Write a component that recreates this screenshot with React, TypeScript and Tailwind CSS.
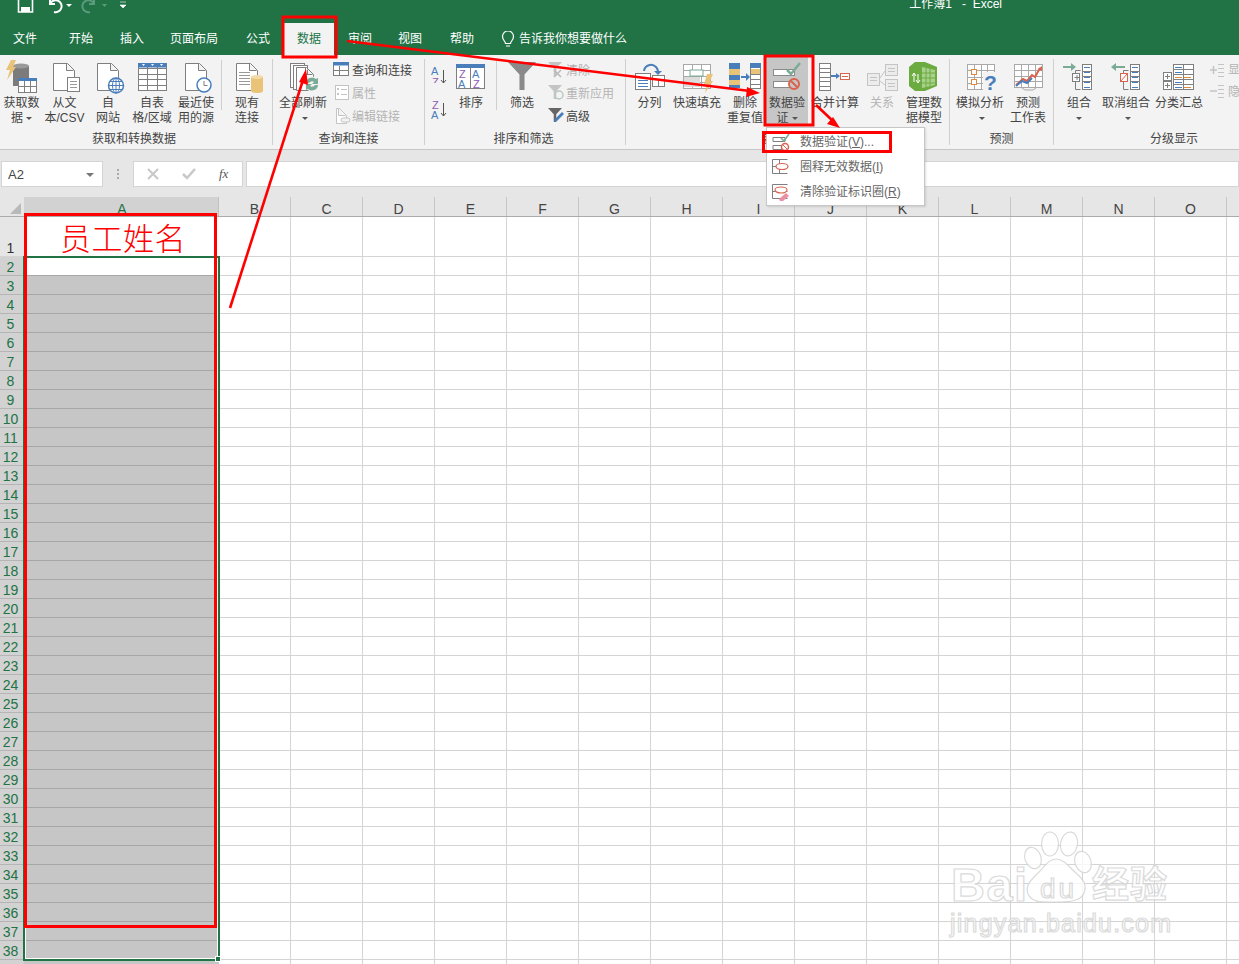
import React from "react";

const GRAY = "#7f7f7f";
const BLUE = "#4a7ebb";
const ORANGE = "#e9c377";
const RED = "#d9634c";
const TEAL = "#7aab96";
const FADED = "#c4c4c4";
const PURPLE = "#8e5bb5";

const COLUMNS = ["B", "C", "D", "E", "F", "G", "H", "I", "J", "K", "L", "M", "N", "O", "P"];
const ROWS = Array.from({ length: 38 }, (_, i) => i + 2);

function Caret({ shift }: { shift?: boolean }) {
  return (
    <svg width="6" height="3" viewBox="0 0 6 3" className={`inline-block align-middle ${shift ? "ml-[4px]" : ""}`}>
      <path d="M0 0h6L3 3z" fill="#555" />
    </svg>
  );
}

function Doc({ x, y, w = 21, h = 27, c = GRAY }: { x: number; y: number; w?: number; h?: number; c?: string }) {
  return (
    <path
      d={`M${x + 0.5} ${y + 0.5}h${w - 7}l7 7v${h - 7}h-${w}z M${x + w - 7.5} ${y + 0.5}v7h7`}
      fill="#fff"
      stroke={c}
    />
  );
}

interface IBtnProps {
  x: number;
  w: number;
  lines: React.ReactNode[];
  active?: boolean;
  children?: React.ReactNode;
}
// x is the page x of the button, icon paths are written in page coordinates
function Btn({ x, w, lines, active, children }: IBtnProps) {
  return (
    <div
      style={{ width: w }}
      className={`flex flex-col items-center shrink-0 whitespace-nowrap ${
        active ? "bg-[#c6c6c6] -mt-[2px] pt-[2px] h-[67px]" : ""
      }`}
    >
      <svg width={w} height="36" viewBox={`${x} 59 ${w} 36`} className="shrink-0 block mb-[1px]">
        {children}
      </svg>
      {lines.map((l, i) => (
        <div key={i} className="h-[15px] leading-[15px] flex items-center gap-[3px]">
          {l}
        </div>
      ))}
    </div>
  );
}

function Small({
  y,
  x,
  label,
  faded,
  children,
}: {
  y: number;
  x: number;
  label: string;
  faded?: boolean;
  children?: React.ReactNode;
}) {
  return (
    <div className={`flex items-center h-[23px] whitespace-nowrap ${faded ? "text-[#b4b4b4]" : ""}`}>
      <svg width="19" height="23" viewBox={`${x} ${y} 19 23`} className="block shrink-0">
        {children}
      </svg>
      <span>{label}</span>
    </div>
  );
}

function Group({
  w,
  label,
  border = true,
  labelClass = "",
  children,
}: {
  w: number;
  label: string;
  border?: boolean;
  labelClass?: string;
  children: React.ReactNode;
}) {
  return (
    <div
      style={{ width: w }}
      className={`shrink-0 flex flex-col h-[86px] ${border ? "border-r border-[#cfcfcf]" : ""}`}
    >
      <div className="flex h-[73px] shrink-0">{children}</div>
      <div className={`h-[15px] shrink-0 leading-[15px] text-center ${labelClass}`}>{label}</div>
    </div>
  );
}

function GridLines({ x, y, w, h, cols, rows, c = GRAY }: { x: number; y: number; w: number; h: number; cols: number; rows: number; c?: string }) {
  const lines: React.ReactNode[] = [];
  for (let i = 1; i < cols; i++) {
    const px = x + Math.round((w * i) / cols) + 0.5;
    lines.push(<path key={`c${i}`} d={`M${px} ${y}v${h}`} stroke={c} fill="none" />);
  }
  for (let i = 1; i < rows; i++) {
    const py = y + Math.round((h * i) / rows) + 0.5;
    lines.push(<path key={`r${i}`} d={`M${x} ${py}h${w}`} stroke={c} fill="none" />);
  }
  return (
    <g>
      <rect x={x + 0.5} y={y + 0.5} width={w} height={h} fill="#fff" stroke={c} />
      {lines}
    </g>
  );
}

function Lines({ x, y, w, n, gap = 3, c = GRAY }: { x: number; y: number; w: number; n: number; gap?: number; c?: string }) {
  return (
    <g>
      {Array.from({ length: n }, (_, i) => (
        <path key={i} d={`M${x} ${y + i * gap + 0.5}h${w}`} stroke={c} />
      ))}
    </g>
  );
}

function Funnel({ x, y, s, c }: { x: number; y: number; s: number; c: string }) {
  return (
    <path
      d={`M${x} ${y}h${s}l${-s * 0.41} ${s * 0.45}v${s * 0.55}h${-s * 0.18}v${-s * 0.55}z`}
      fill={c}
    />
  );
}

function Outline({ x, c }: { x: number; c: string }) {
  // small +/- outline rows with the bracket and three blue list cells
  return (
    <g>
      <path d={`M${x + 12.5} 71v-0.5h5 M${x + 12.5} 71v2 M${x + 12.5} 82v7.5h5`} stroke={GRAY} fill="none" />
      <rect x={x + 9.5} y={73.5} width="7" height="8" fill="#fff" stroke={c} />
      <rect x={x + 19.5} y={64.5} width="9" height="25" fill="#fff" stroke={GRAY} />
      <Lines x={x + 21} y={67} w={6} n={5} gap={5} c={BLUE} />
      <path d={`M${x + 19} 71.5h10 M${x + 19} 76.5h10 M${x + 19} 81.5h10 M${x + 19} 86.5`} stroke={GRAY} />
    </g>
  );
}

function Ribbon() {
  return (
    <div className="flex h-[95px] bg-[#f3f3f3] border-b border-[#c6c6c6] pt-[4px] text-[#444] overflow-hidden">
      <Group w={273} label="获取和转换数据" labelClass="pr-[4px]">
        <Btn x={0} w={43} lines={["获取数", <>据 <Caret /></>]}>
          <rect x="13" y="66" width="16" height="20" fill="#7c7c7c" />
          <ellipse cx="21" cy="66" rx="8" ry="2.5" fill="#9a9a9a" />
          <path d="M11 60h5l-3 7h3l-9 13 3-10H6z" fill={ORANGE} />
          <rect x="18.5" y="78.5" width="18" height="14" fill="#fff" stroke={GRAY} />
          <rect x="18" y="78" width="19" height="3" fill={BLUE} />
          <path d="M24.5 81v11 M30.500 81v11 M18 86.500h19" stroke={GRAY} />
        </Btn>
        <Btn x={43} w={43} lines={["从文", "本/CSV"]}>
          <Doc x={53} y={63} />
          <rect x="67.5" y="77.5" width="12" height="14" fill="#fff" stroke={GRAY} />
          <Lines x={70} y={81} w={7} n={3} gap={3} c="#999" />
        </Btn>
        <Btn x={86} w={44} lines={["自", "网站"]}>
          <Doc x={97} y={63} />
          <circle cx="116" cy="85.5" r="7.5" fill="#fff" stroke={BLUE} strokeWidth="1.5" />
          <path d="M108.5 85.5h15 M116 78v15 M110 81.5h12 M110 89.5h12" stroke={BLUE} />
          <ellipse cx="116" cy="85.5" rx="3.5" ry="7.5" fill="none" stroke={BLUE} />
        </Btn>
        <Btn x={130} w={44} lines={["自表", "格/区域"]}>
          <GridLines x={138} y={63} w={28} h={27} cols={3} rows={5} />
          <rect x="138" y="63" width="28.5" height="4.5" fill={BLUE} />
          <path d="M142 64h3l-1.5 2zM151 64h3l-1.5 2zM160 64h3l-1.5 2z" fill="#fff" />
        </Btn>
        <Btn x={174} w={44} lines={["最近使", "用的源"]}>
          <Doc x={185} y={63} />
          <circle cx="204" cy="85" r="7" fill="#fff" stroke={BLUE} strokeWidth="1.5" />
          <path d="M204 81v4.5h3.5" stroke={GRAY} fill="none" />
        </Btn>
        <div className="w-[1px] h-[50px] bg-[#cfcfcf] ml-[3px] mr-[2px] mt-[1px] shrink-0" />
        <Btn x={224} w={46} lines={["现有", "连接"]}>
          <Doc x={236} y={63} />
          <Lines x={239} y={72} w={11} n={5} gap={3} c="#999" />
          <rect x="251" y="77" width="12" height="14" fill={ORANGE} />
          <ellipse cx="257" cy="77" rx="6" ry="2" fill="#f3dba9" />
          <ellipse cx="257" cy="91" rx="6" ry="2" fill={ORANGE} />
        </Btn>
      </Group>
      <Group w={152} label="查询和连接">
        <div className="w-[5px] shrink-0" />
        <Btn x={278} w={50} lines={["全部刷新", <Caret shift />]}>
          <rect x="290.5" y="63.5" width="14" height="24" fill="#fff" stroke={GRAY} />
          <rect x="293.5" y="65.5" width="14" height="24" fill="#fff" stroke={GRAY} />
          <Doc x={296} y={67} w={17} h={23} />
          <circle cx="312" cy="84" r="7.5" fill="#f3f3f3" />
          <path d="M306 83a6 6 0 0 1 10-4l2-1v6h-6l2-2a3.5 3.5 0 0 0-5 1zM318 85a6 6 0 0 1-10 4l-2 1v-6h6l-2 2a3.5 3.5 0 0 0 5-1z" fill={TEAL} />
        </Btn>
        <div className="flex flex-col w-[90px] shrink-0 ml-[5px]">
          <Small y={59} x={333} label="查询和连接">
            <rect x="333.5" y="62.5" width="15" height="13" fill="#fff" stroke={GRAY} />
            <rect x="333" y="62" width="16" height="3.5" fill={BLUE} />
            <path d="M339.5 66v10 M333 70.5h16" stroke={GRAY} />
          </Small>
          <Small y={82} x={333} label="属性" faded>
            <rect x="335.5" y="85.5" width="13" height="14" fill="#fff" stroke={FADED} />
            <Lines x={341} y={89} w={6} n={2} gap={5} c={FADED} />
            <path d="M337 88h2v2h-2zM337 93h2v2h-2z" fill={FADED} />
          </Small>
          <Small y={105} x={333} label="编辑链接" faded>
            <Doc x={336} y={108} w={10} h={15} c={FADED} />
            <path d="M343 118h5a2 2 0 0 1 0 4h-5a2 2 0 0 1 0-4z" fill="#f3f3f3" stroke={FADED} />
          </Small>
        </div>
      </Group>
      <Group w={201} label="排序和筛选" labelClass="pr-[3px]">
        <div className="flex flex-col w-[28px] shrink-0 pl-[5px]">
          <svg width="20" height="23" viewBox="430 59 20 23" className="block mt-[1px]">
            <text x="431" y="74" fontSize="11" fill={BLUE} fontFamily="Liberation Sans">A</text>
            <text x="432" y="85" fontSize="11" fill={PURPLE} fontFamily="Liberation Sans">Z</text>
            <path d="M443.5 69v13M441 79l2.500 3 2.500-3" fill="none" stroke="#555" />
          </svg>
          <svg width="20" height="23" viewBox="430 96 20 23" className="block mt-[14px]">
            <text x="432" y="108" fontSize="11" fill={PURPLE} fontFamily="Liberation Sans">Z</text>
            <text x="431" y="118" fontSize="11" fill={BLUE} fontFamily="Liberation Sans">A</text>
            <path d="M443.5 102v13M441 112l2.500 3 2.500-3" fill="none" stroke="#555" />
          </svg>
        </div>
        <Btn x={453} w={36} lines={["排序"]}>
          <rect x="456.5" y="64.5" width="28" height="24" fill="#fff" stroke={GRAY} />
          <rect x="456" y="64" width="29" height="4" fill={BLUE} />
          <path d="M470.5 68v21" stroke={GRAY} />
          <text x="459" y="78" fontSize="11" fill={PURPLE} fontFamily="Liberation Sans">Z</text>
          <text x="458" y="88" fontSize="11" fill={BLUE} fontFamily="Liberation Sans">A</text>
          <text x="472" y="78" fontSize="11" fill={BLUE} fontFamily="Liberation Sans">A</text>
          <text x="473" y="88" fontSize="11" fill={PURPLE} fontFamily="Liberation Sans">Z</text>
        </Btn>
        <div className="w-[1px] h-[50px] bg-[#cfcfcf] ml-[7px] mr-[3px] mt-[1px] shrink-0" />
        <Btn x={499} w={44} lines={["筛选"]}>
          <Funnel x={507} y={62} s={28} c="#8a8a8a" />
        </Btn>
        <div className="flex flex-col w-[78px] shrink-0 ml-[3px]">
          <Small y={59} x={546} label="清除" faded>
            <Funnel x={547} y={62} s={14} c={FADED} />
            <path d="M553 70l7 7M560 70l-7 7" stroke="#b8b8b8" strokeWidth="1.5" />
          </Small>
          <Small y={82} x={546} label="重新应用" faded>
            <Funnel x={547} y={85} s={14} c={FADED} />
            <circle cx="558" cy="95" r="4" fill="none" stroke="#b8c9c2" strokeWidth="1.5" />
          </Small>
          <Small y={105} x={546} label="高级">
            <Funnel x={547} y={108} s={14} c="#666" />
            <path d="M553 122l1-3 7-7 2 2-7 7z" fill={BLUE} />
          </Small>
        </div>
      </Group>
      <Group w={324} label="数据工具">
        <div className="w-[3px] shrink-0" />
        <Btn x={629} w={41} lines={["分列"]}>
          <rect x="635.5" y="73.5" width="15" height="16" fill="#fff" stroke={GRAY} />
          <Lines x={638} y={77} w={10} n={4} gap={3} c={BLUE} />
          <rect x="652.5" y="75.5" width="12" height="11" fill="#fff" stroke={GRAY} />
          <path d="M652 79.500h13 M658.500 80v6" stroke={GRAY} />
          <path d="M644 71a7 7 0 0 1 12-4q2 2 2 5" fill="none" stroke={BLUE} strokeWidth="2" />
          <path d="M654 71h8l-4 4z" fill={BLUE} />
        </Btn>
        <Btn x={670} w={54} lines={["快速填充"]}>
          <GridLines x={683} y={64} w={27} h={24} cols={3} rows={4} c="#a9a9a9" />
          <rect x="690" y="70" width="13" height="6" fill="#fff" stroke={TEAL} />
          <rect x="684" y="77" width="16" height="10" fill="#dcdcdc" />
          <path d="M707 74h6l-3 7h3l-8 12 2-9h-3z" fill={ORANGE} />
        </Btn>
        <Btn x={724} w={42} lines={["删除", "重复值"]}>
          <rect x="729" y="63" width="11" height="25" fill={BLUE} />
          <rect x="729" y="69" width="11" height="6" fill={ORANGE} />
          <rect x="729" y="80" width="11" height="5" fill={ORANGE} />
          <path d="M741 77h6" stroke={BLUE} strokeWidth="2" />
          <path d="M746 73l4 4-4 4z" fill={BLUE} />
          <rect x="750.5" y="63.5" width="10" height="25" fill="#fff" stroke={GRAY} />
          <rect x="750" y="63" width="11" height="5" fill={BLUE} />
          <rect x="751" y="69" width="9" height="5" fill={ORANGE} />
          <path d="M750 74.500h11M750 79.500h11M750 84.500h11" stroke={GRAY} />
        </Btn>
        <Btn x={766} w={42} active lines={["数据验", <>证 <Caret /></>]}>
          <rect x="773.5" y="69.5" width="21" height="6" fill="#fff" stroke="#8a8a8a" />
          <rect x="773.5" y="81.5" width="21" height="6" fill="#fff" stroke="#8a8a8a" />
          <path d="M787 70l4 4 9-11" fill="none" stroke={TEAL} strokeWidth="2.5" />
          <circle cx="794" cy="84" r="5" fill="#c6c6c6" stroke={RED} strokeWidth="2" />
          <path d="M790.5 80.5l7 7" stroke={RED} strokeWidth="2" />
        </Btn>
        <Btn x={808} w={54} lines={["合并计算"]}>
          <GridLines x={819} y={63} w={11} h={27} cols={1} rows={6} />
          <path d="M831 76h6" stroke={BLUE} strokeWidth="2" />
          <path d="M836 73l4 3-4 3z" fill={BLUE} />
          <rect x="840.5" y="73.5" width="9" height="6" fill="#fff" stroke={RED} />
          <path d="M842 76.500h6" stroke={RED} />
        </Btn>
        <Btn x={862} w={40} lines={[<span className="text-[#b4b4b4]">关系</span>]}>
          <rect x="867.5" y="73.5" width="12" height="12" fill="#ececec" stroke={FADED} />
          <rect x="885.5" y="64.5" width="12" height="11" fill="#ececec" stroke={FADED} />
          <rect x="885.5" y="79.5" width="12" height="11" fill="#ececec" stroke={FADED} />
          <path d="M880 78l5-7M880 81l5 4" stroke={FADED} />
          <Lines x={870} y={77} w={7} n={2} gap={3} c={FADED} />
          <Lines x={888} y={68} w={7} n={2} gap={3} c={FADED} />
          <Lines x={888} y={83} w={7} n={2} gap={3} c={FADED} />
        </Btn>
        <Btn x={902} w={44} lines={["管理数", "据模型"]}>
          <path d="M915 62h10l12 5v19l-12 5h-10l-6-5V67z" fill="#6cab3f" />
          <path d="M922 67l13 3v15l-13 3z" fill="#a9d18e" />
          <path d="M926 68v19M930 69v17M922 73h13M922 78h13M922 83h13" stroke="#6cab3f" />
          <path d="M914 82v-9m0 0l-2 3m2-3l2 3M918 74v9m0 0l-2-3m2 3l2-3" stroke="#fff" fill="none" />
        </Btn>
      </Group>
      <Group w={104} label="预测">
        <div className="w-[6px] shrink-0" />
        <Btn x={956} w={48} lines={["模拟分析", <Caret shift />]}>
          <GridLines x={967} y={64} w={27} h={25} cols={4} rows={4} c="#a9a9a9" />
          <rect x="971.5" y="69.5" width="5" height="5" fill="#fff" stroke="#e08a3c" />
          <rect x="971.5" y="79.5" width="5" height="5" fill="#fff" stroke="#e08a3c" />
          <rect x="983" y="72" width="18" height="20" fill="#f3f3f3" />
          <text x="984" y="90" fontSize="21" fontWeight="700" fill={BLUE} fontFamily="Liberation Sans">?</text>
        </Btn>
        <Btn x={1004} w={48} lines={["预测", "工作表"]}>
          <GridLines x={1014} y={64} w={28} h={23} cols={4} rows={4} c="#a9a9a9" />
          <path d="M1016 85l7-6 4 2 5-6 3 2 5-9" fill="none" stroke={RED} strokeWidth="2" />
          <path d="M1016 86l6-5 5 2 5-5" fill="none" stroke={BLUE} strokeWidth="2" />
          <path d="M1038 69l4-3v5z" fill={RED} />
          <path d="M1022 88l3 2h8l3-2" fill="none" stroke="#a9a9a9" />
        </Btn>
      </Group>
      <Group w={240} label="分级显示" border={false}>
        <div className="w-[4px] shrink-0" />
        <Btn x={1058} w={42} lines={["组合", <Caret />]}>
          <path d="M1063 67h10" stroke={TEAL} strokeWidth="2" />
          <path d="M1071 63l5 4-5 4z" fill={TEAL} />
          <Outline x={1063} c={GRAY} />
          <path d="M1074.500 77.500h5M1077 75v5" stroke={GRAY} />
        </Btn>
        <Btn x={1100} w={52} lines={["取消组合", <Caret shift />]}>
          <path d="M1115 67h10" stroke={TEAL} strokeWidth="2" />
          <path d="M1116 63l-5 4 5 4z" fill={TEAL} />
          <Outline x={1111} c={RED} />
          <path d="M1121 81l6-7" stroke={RED} />
        </Btn>
        <Btn x={1152} w={54} lines={["分类汇总"]}>
          <rect x="1163.5" y="72.5" width="8" height="8" fill="#fff" stroke={GRAY} />
          <rect x="1163.5" y="81.5" width="8" height="8" fill="#fff" stroke={GRAY} />
          <path d="M1165 76.500h5M1167.500 74v5M1165 85.500h5M1167.500 83v5" stroke={GRAY} />
          <GridLines x={1173} y={64} w={20} h={25} cols={2} rows={5} />
          <path d="M1175 67.500h7M1175 72.500h7M1175 77.500h7M1175 82.500h7M1175 87.500h7" stroke={BLUE} />
          <path d="M1184 77.500h7M1184 87.500h7M1175 77.500h7" stroke="#e08a3c" />
        </Btn>
        <div className="flex flex-col shrink-0 ml-[4px] text-[#b4b4b4]">
          <div className="flex items-center h-[22px] whitespace-nowrap">
            <svg width="18" height="22" viewBox="1210 59 18 22" className="block">
              <path d="M1210 70h7M1213.500 66v8" stroke={FADED} strokeWidth="1.5" />
              <Lines x={1218} y={64} w={6} n={4} gap={4} c={FADED} />
            </svg>
            <span>显示明细</span>
          </div>
          <div className="flex items-center h-[22px] whitespace-nowrap">
            <svg width="18" height="22" viewBox="1210 81 18 22" className="block">
              <path d="M1210 91h7" stroke={FADED} strokeWidth="1.5" />
              <Lines x={1218} y={85} w={6} n={4} gap={4} c={FADED} />
            </svg>
            <span>隐藏明细</span>
          </div>
        </div>
      </Group>
    </div>
  );
}

function MenuItem({ label, hot, tail, children }: { label: string; hot: string; tail?: string; children: React.ReactNode }) {
  return (
    <div className="flex items-center h-[25px] text-[#666] whitespace-nowrap">
      <svg width="33" height="25" viewBox="0 0 33 25" className="block shrink-0">
        {children}
      </svg>
      <span>
        {label}(<span className="underline">{hot}</span>){tail}
      </span>
    </div>
  );
}

function ValidationMenu() {
  return (
    <div className="absolute left-[766px] top-[127px] w-[159px] h-[79px] bg-white border border-[#c6c6c6] shadow-[1px_1px_2px_rgba(0,0,0,0.12)] pt-[1px]">
      <MenuItem label="数据验证" hot="V" tail="...">
        <path d="M6 8.500h12v4H6zM6 16.500h12v4H6z" fill="#fff" stroke={GRAY} />
        <path d="M14 9l3 3 5-7" fill="none" stroke={TEAL} strokeWidth="1.6" />
        <circle cx="18" cy="18" r="3.5" fill="#fff" stroke={RED} strokeWidth="1.5" />
        <path d="M15.500 15.500l5 5" stroke={RED} />
      </MenuItem>
      <MenuItem label="圈释无效数据" hot="I">
        <path d="M5.500 5.500h15M5.500 19.500h15M5.500 5.500v14M5.500 12.500h15M12.500 5.500v14" stroke={GRAY} fill="none" />
        <ellipse cx="15" cy="12.500" rx="6" ry="3" fill="#fff" stroke={RED} strokeWidth="1.2" />
      </MenuItem>
      <MenuItem label="清除验证标识圈" hot="R">
        <path d="M5.500 5.500h15M5.500 19.500h15M5.500 5.500v14M5.500 12.500h15" stroke={GRAY} fill="none" />
        <ellipse cx="14" cy="11" rx="6" ry="3" fill="#fff" stroke={RED} strokeWidth="1.2" />
        <path d="M12 20l7-6 3 3-6 5h-3z" fill="#eb8fa3" />
      </MenuItem>
    </div>
  );
}

function Annotations() {
  return (
    <svg width="1239" height="964" viewBox="0 0 1239 964" className="absolute left-0 top-0 pointer-events-none">
      <g fill="none" stroke="#ff0000">
        <rect x="283" y="17" width="53" height="40" strokeWidth="3" />
        <rect x="765" y="56" width="48" height="69" strokeWidth="3" />
        <rect x="763.5" y="132.500" width="127" height="19" strokeWidth="3" />
        <rect x="25.5" y="214.500" width="190" height="712" strokeWidth="3" />
        <path d="M230 308L303 80" strokeWidth="2.600" />
        <path d="M347 41L750 91" strokeWidth="2.600" />
        <path d="M816 105L834 122" strokeWidth="2.600" />
      </g>
      <g fill="#ff0000">
        <path d="M306 69l2 16-9-3z" />
        <path d="M760 93l-14 4 1-10z" />
        <path d="M840 128l-13-4 6-7z" />
      </g>
    </svg>
  );
}

function Watermark() {
  return (
    <svg width="240" height="125" viewBox="940 825 240 125" className="absolute left-[940px] top-[825px] pointer-events-none opacity-80">
      <g fill="#fff" stroke="#d2d2d2" strokeWidth="1.2">
        <ellipse cx="1033" cy="858" rx="8" ry="11" transform="rotate(-20 1033 858)" />
        <ellipse cx="1050" cy="844" rx="8.500" ry="12" />
        <ellipse cx="1069" cy="844" rx="8.500" ry="12" transform="rotate(10 1069 844)" />
        <ellipse cx="1083" cy="862" rx="8" ry="11" transform="rotate(-20 1083 862)" />
        <path d="M1056 859c8 0 13 8 20 14 8 7 11 12 8 20-3 8-14 9-28 9s-24 1-28-8c-3-8 2-13 9-20 7-6 11-15 19-15z" />
        <text x="951" y="901" fontSize="47" fontWeight="700" fontFamily="Liberation Sans" textLength="76">Bai</text>
        <text x="1040" y="898" fontSize="28" fontFamily="Liberation Sans" textLength="34">du</text>
        <text x="1092" y="898" fontSize="37" fontWeight="700" fontFamily="Noto Sans CJK SC" textLength="75">经验</text>
        <text x="950" y="932" fontSize="25" fontFamily="Liberation Sans" textLength="221">jingyan.baidu.com</text>
      </g>
    </svg>
  );
}

export default function App() {
  return (
    <div className="relative w-[1239px] h-[964px] overflow-hidden bg-white text-[12px] text-[#444] font-['Liberation_Sans','Noto_Sans_CJK_SC',sans-serif]">
      <div className="h-[55px] bg-[#217346] text-white">
        <div className="h-[25px] flex relative overflow-hidden">
          <svg width="140" height="16" viewBox="0 0 140 16" className="block shrink-0">
            <path d="M18.500 -3h11l3 3v12h-14z" fill="none" stroke="#fff" strokeWidth="1.6" />
            <path d="M21 7h9v5h-9z" fill="#fff" />
            <path d="M50 -1v5h5 M50 4a6 6 0 1 1 4 8" fill="none" stroke="#fff" strokeWidth="2" />
            <path d="M66 4h6l-3 3z" fill="#fff" />
            <path d="M94 -1v5h-5 M94 4a6 6 0 1 0-4 8" fill="none" stroke="#5b9a7c" strokeWidth="2" />
            <path d="M102 4h5l-2.500 3z" fill="#5b9a7c" />
            <path d="M120 2h6M120 5h6l-3 3z" fill="#fff" stroke="#fff" strokeWidth="0.6" />
          </svg>
          <div className="flex-1" />
          <div className="-mt-[4px] h-[16px] leading-[16px] whitespace-pre mr-[237px]">工作簿1   -  Excel</div>
        </div>
        <div className="flex h-[30px] leading-[28px] items-start">
          <div className="w-[50px] text-center">文件</div>
          <div className="w-[62px] text-center">开始</div>
          <div className="w-[40px] text-center">插入</div>
          <div className="w-[84px] text-center">页面布局</div>
          <div className="w-[44px] text-center">公式</div>
          <div className="w-[50px] ml-[4px] h-[32px] -mt-[2px] pt-[2px] text-center bg-[#f3f3f3] text-[#217346]">数据</div>
          <div className="w-[52px] text-center">审阅</div>
          <div className="w-[48px] text-center">视图</div>
          <div className="w-[56px] text-center">帮助</div>
          <div className="flex items-center h-[28px] pl-[11px] gap-[4px]">
            <svg width="14" height="17" viewBox="0 0 14 17">
              <path d="M4.500 12.500c0-2-3-3.500-3-7a5.500 5.500 0 0 1 11 0c0 3.500-3 5-3 7z M5 15h4" fill="none" stroke="#fff" strokeWidth="1.2" />
            </svg>
            <span>告诉我你想要做什么</span>
          </div>
        </div>
      </div>
      <Ribbon />
      <div className="h-[47px] bg-[#e6e6e6] pt-[11px] flex items-start">
        <div className="ml-[1px] w-[102px] h-[26px] bg-white border border-[#d4d4d4] flex items-center justify-between pl-[6px] pr-[8px] pt-[2px] text-[13px]">
          <span>A2</span>
          <svg width="8" height="4" viewBox="0 0 8 4"><path d="M0 0h8L4 4z" fill="#777" /></svg>
        </div>
        <div className="w-[30px] h-[26px] flex flex-col items-center justify-center gap-[2px]">
          <div className="w-[2px] h-[2px] bg-[#aaa]" />
          <div className="w-[2px] h-[2px] bg-[#aaa]" />
          <div className="w-[2px] h-[2px] bg-[#aaa]" />
        </div>
        <div className="w-[110px] h-[26px] bg-white border border-[#d4d4d4] flex items-center">
          <svg width="108" height="24" viewBox="133 162 108 24">
            <path d="M147 169l10 10M157 169l-10 10" stroke="#c8c8c8" strokeWidth="2" />
            <path d="M182 174l4 4 8-9" stroke="#c8c8c8" strokeWidth="2.5" fill="none" />
            <text x="218" y="178" fontSize="13" fontStyle="italic" fontFamily="Liberation Serif" fill="#555">fx</text>
          </svg>
        </div>
        <div className="ml-[3px] flex-1 h-[26px] bg-white border border-[#d4d4d4]" />
      </div>
      <div className="relative text-[14px]">
        <div className="flex h-[20px] bg-[#e6e6e6] border-b border-[#ababab]">
          <div className="w-[24px] relative shrink-0">
            <svg width="24" height="20" viewBox="0 0 24 20" className="block">
              <path d="M21 6v11H10z" fill="#b9b9b9" />
            </svg>
          </div>
          <div className="w-[195px] shrink-0 bg-[#d2d2d2] text-[#217346] text-center pl-[2px] leading-[24px] border-r border-[#c0c0c0]">A</div>
          {COLUMNS.map((c) => (
            <div key={c} className="w-[72px] shrink-0 text-center leading-[24px] border-r border-[#c6c6c6]">{c}</div>
          ))}
        </div>
        <div className="flex h-[40px] border-b border-[#d4d4d4]">
          <div className="w-[24px] shrink-0 bg-[#e6e6e6] text-center pr-[3px] flex items-end justify-center leading-[16px] text-[#333]">1</div>
          <div className="w-[195px] shrink-0 text-center pl-[3px] text-[#ff0000] text-[31px] leading-[40px] tracking-[0.5px] font-light font-['Noto_Sans_CJK_SC',sans-serif]">员工姓名</div>
          {COLUMNS.map((c) => (
            <div key={c} className="w-[72px] shrink-0 border-r border-[#d4d4d4]" />
          ))}
        </div>
        {ROWS.map((r) => (
          <div key={r} className="flex h-[19px] border-b border-[#d4d4d4]">
            <div className="w-[24px] shrink-0 bg-[#d2d2d2] text-[#217346] text-center pr-[3px] leading-[20px] border-b border-[#b5b5b5] h-[19px]">{r}</div>
            <div
              className={`w-[195px] shrink-0 h-[19px] border-b ${
                r === 2 ? "bg-white border-[#a6a6a6]" : "bg-[#c6c6c6] border-[#a6a6a6]"
              }`}
            />
            {COLUMNS.map((c) => (
              <div key={c} className="w-[72px] shrink-0 border-r border-[#d4d4d4]" />
            ))}
          </div>
        ))}
        <div className="absolute left-[23px] top-[59px] w-[197px] h-[705px] border-2 border-[#217346]">
          <div className="w-full h-full border border-white" />
          <div className="absolute -right-[3px] -bottom-[3px] w-[6px] h-[6px] bg-[#217346] border border-white" />
        </div>
      </div>
      <ValidationMenu />
      <Watermark />
      <Annotations />
    </div>
  );
}
